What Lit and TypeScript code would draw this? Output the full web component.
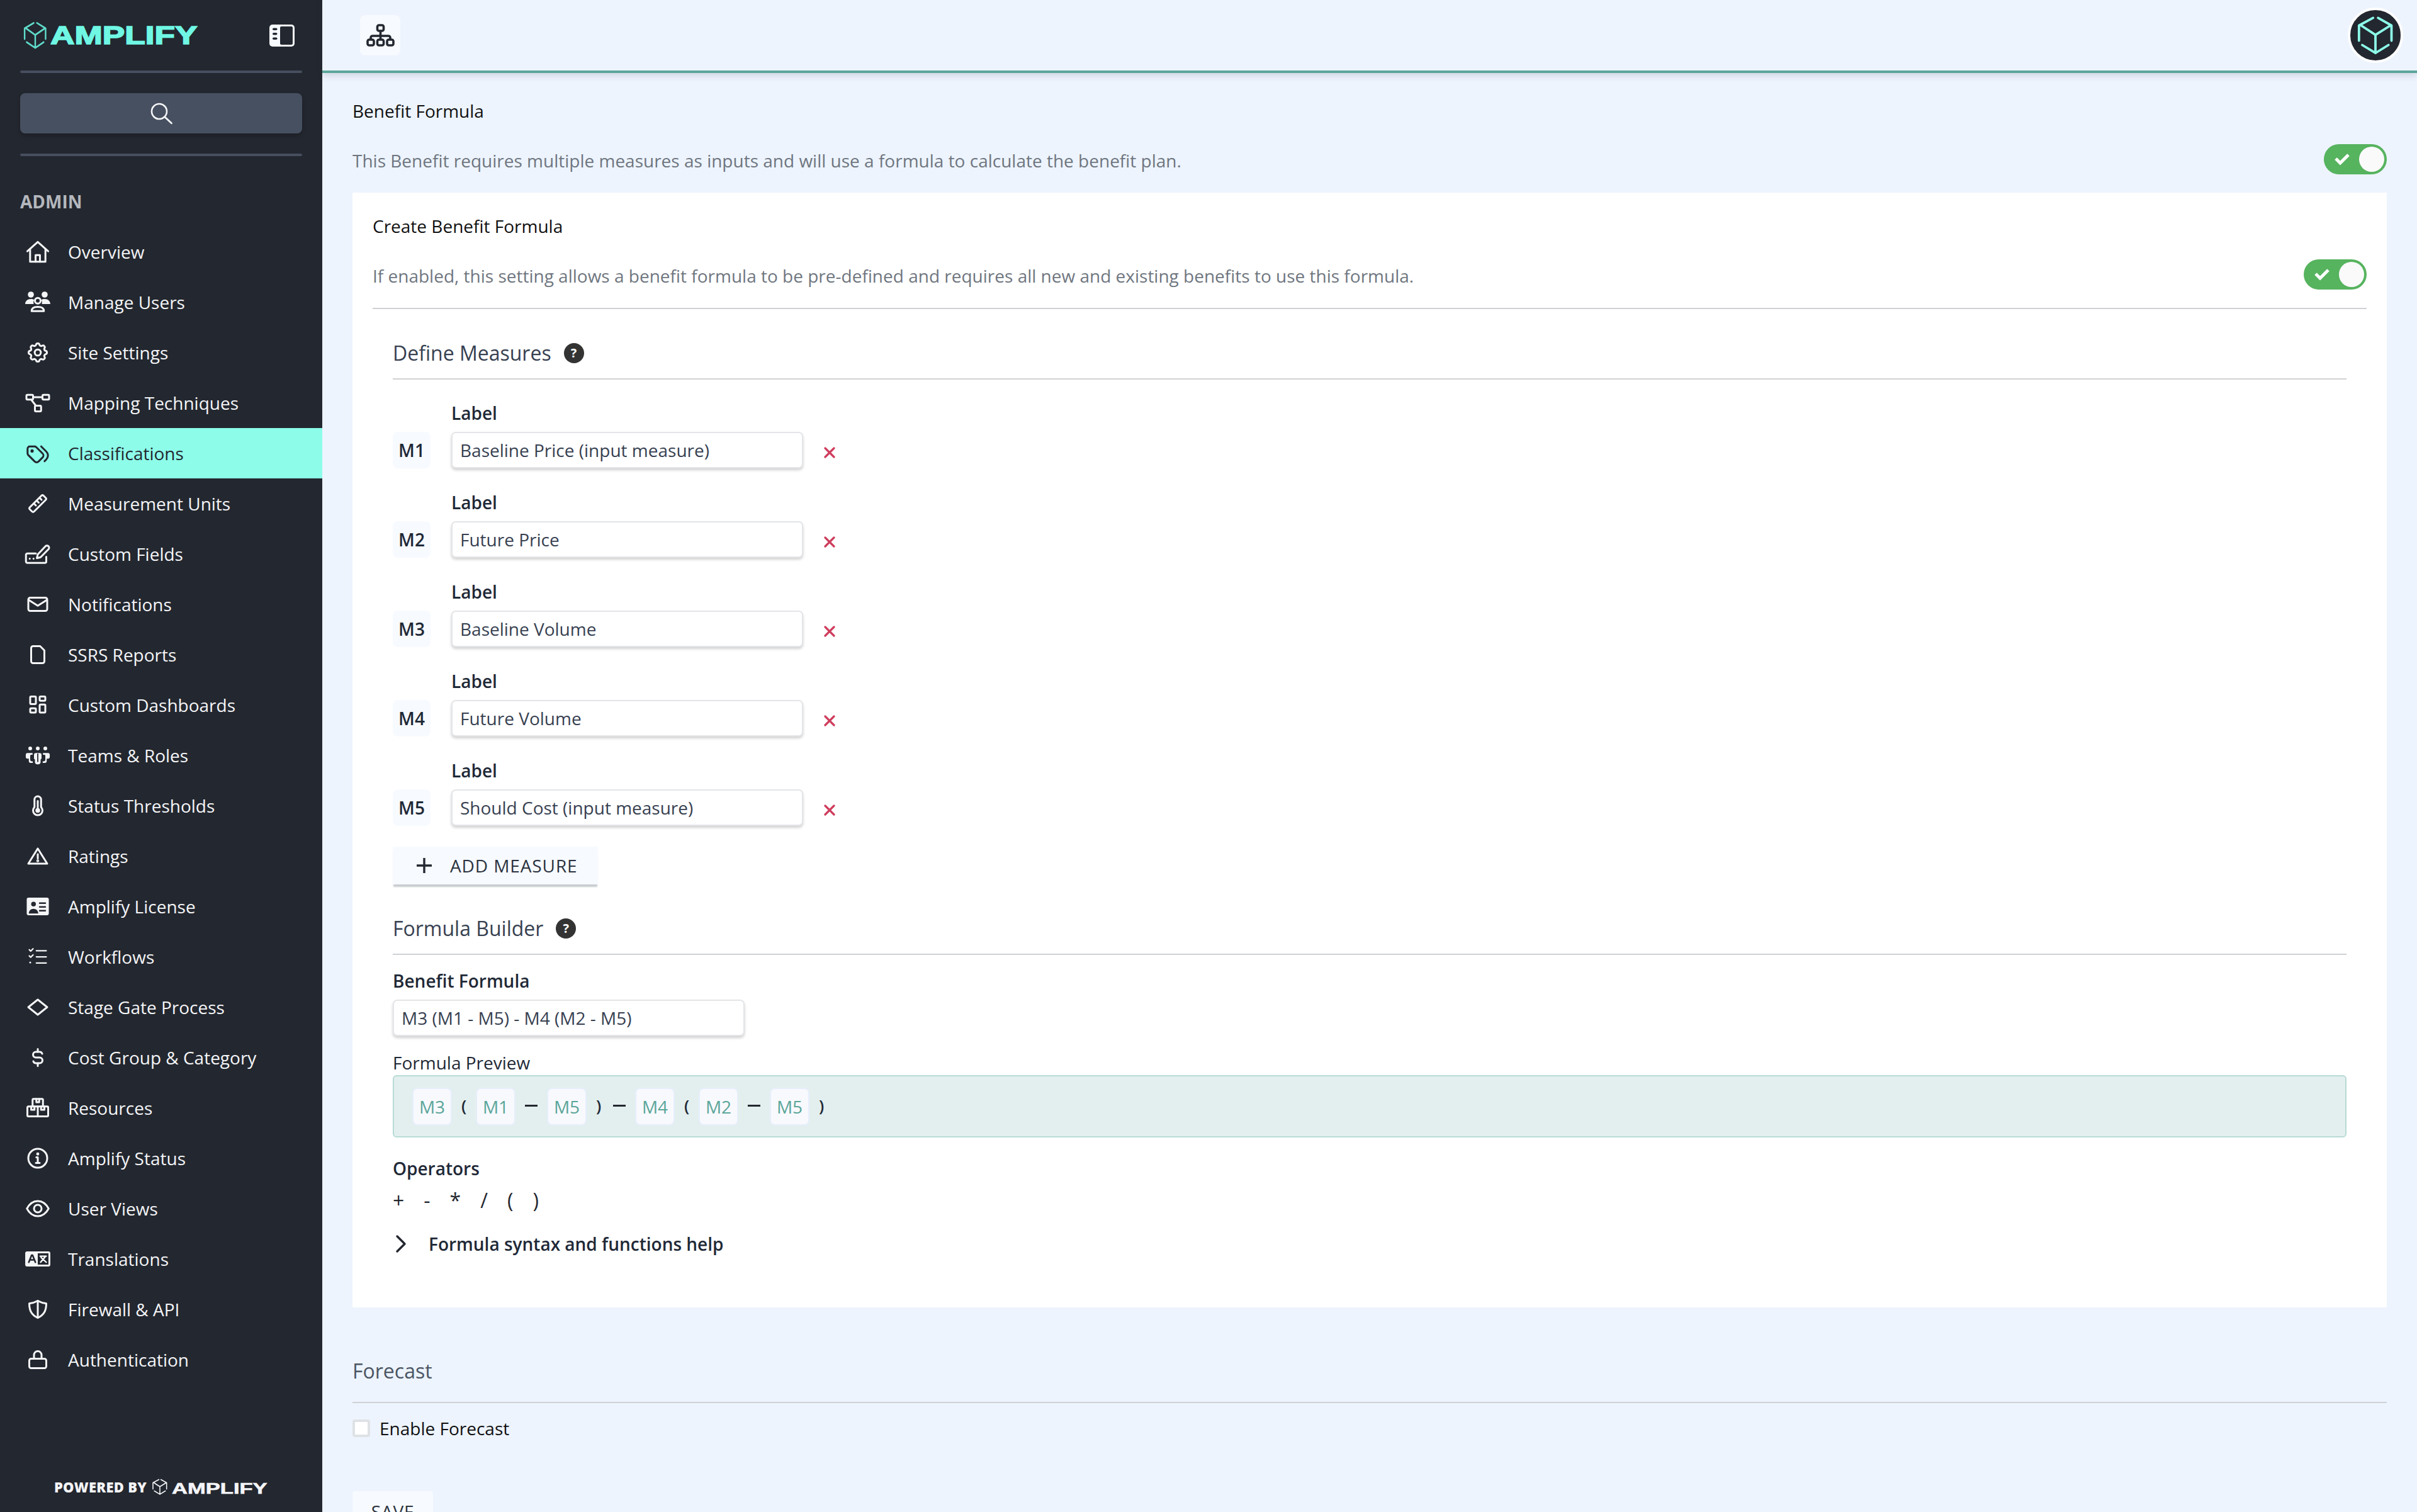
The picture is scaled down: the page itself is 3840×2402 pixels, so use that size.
import { LitElement, html, css, svg } from "lit";
import { customElement } from "lit/decorators.js";

const D = "#23272f";
const sc = (s: number, c: unknown) => svg`<g transform="translate(12 12) scale(${s}) translate(-12 -12)" stroke-width=${2 / s}>${c}</g>`;
const icons: Record<string, unknown> = {
  home: sc(1.16, svg`<path d="M2.500 11.500 12 3l9.500 8.500"/><path d="M5 9.500V21h14V9.500"/><path d="M10 21v-6h4v6"/>`),
  users: svg`<g fill="currentColor" stroke="none"><circle cx="4.700" cy="4" r="3.200"/><circle cx="19.300" cy="4" r="3.200"/><path d="M-1.300 14c0-3 2.400-5.300 6-5.300 1.300 0 2.600.3 3.600 1-.8 1-1.100 2.500-.6 4.300z"/><path d="M25.300 14c0-3-2.400-5.300-6-5.300-1.300 0-2.600.3-3.600 1 .8 1 1.100 2.500.6 4.300z"/></g><circle cx="12" cy="10.500" r="3"/><path d="M5.500 21.500c0-3 2.500-4.500 6.500-4.500s6.500 1.500 6.500 4.500z"/>`,
  gear: sc(1.08, svg`<path d="M10.325 4.317c.426-1.756 2.924-1.756 3.350 0a1.724 1.724 0 0 0 2.573 1.066c1.543-.94 3.310.826 2.370 2.370a1.724 1.724 0 0 0 1.065 2.572c1.756.426 1.756 2.924 0 3.350a1.724 1.724 0 0 0-1.066 2.573c.94 1.543-.826 3.310-2.370 2.370a1.724 1.724 0 0 0-2.572 1.065c-.426 1.756-2.924 1.756-3.350 0a1.724 1.724 0 0 0-2.573-1.066c-1.543.94-3.310-.826-2.370-2.370a1.724 1.724 0 0 0-1.065-2.572c-1.756-.426-1.756-2.924 0-3.350a1.724 1.724 0 0 0 1.066-2.573c-.94-1.543.826-3.310 2.370-2.370 1 .608 2.296.07 2.572-1.065z"/><circle cx="12" cy="12" r="3"/>`),
  map: svg`<rect x="0" y="3.500" width="7" height="5" rx="1"/><rect x="17" y="3.500" width="7" height="5" rx="1"/><rect x="9" y="15" width="6.500" height="6" rx="1"/><path d="M7 6h10M5 8.500l5 6.500"/>`,
  tags: sc(1.2, svg`<path d="M3 8v4.172a2 2 0 0 0 .586 1.414l5.710 5.710a2.410 2.410 0 0 0 3.408 0l3.592-3.592a2.410 2.410 0 0 0 0-3.408l-5.710-5.710A2 2 0 0 0 9.172 6H5a2 2 0 0 0-2 2z"/><path d="M18 19l1.592-1.592a4.820 4.820 0 0 0 0-6.816L15 6"/><circle cx="7" cy="10" r=".6" fill="currentColor"/>`),
  ruler: svg`<path d="M3.500 16 16 3.500a1.500 1.500 0 0 1 2 0l2.500 2.500a1.500 1.500 0 0 1 0 2L8 20.500a1.500 1.500 0 0 1-2 0L3.500 18a1.500 1.500 0 0 1 0-2z"/><path d="M8 12l2 2M11 9l2 2M14 6l2 2"/>`,
  fields: svg`<path d="M21 15v5a1.500 1.500 0 0 1-1.500 1.500H1A1.500 1.500 0 0 1-.5 20v-7A1.500 1.500 0 0 1 1 11.500h9"/><path d="M11 16.500l1-4L20 4a2 2 0 0 1 3.500 2.800L15 15.500z"/><path d="M3.500 17h.01M7.500 17h.01"/>`,
  mail: svg`<rect x="2" y="5" width="20" height="14" rx="2"/><path d="M2.500 7.500l9.500 6 9.500-6"/>`,
  file: svg`<path d="M5 5a2 2 0 0 1 2-2h7.500L19 7.500V19a2 2 0 0 1-2 2H7a2 2 0 0 1-2-2z"/>`,
  dash: svg`<path d="M5 3h4a1 1 0 0 1 1 1v6a1 1 0 0 1-1 1H5a1 1 0 0 1-1-1V4a1 1 0 0 1 1-1"/><path d="M5 15.500h4a1 1 0 0 1 1 1V19a1 1 0 0 1-1 1H5a1 1 0 0 1-1-1v-2.500a1 1 0 0 1 1-1"/><path d="M15 11.500h4a1 1 0 0 1 1 1V19a1 1 0 0 1-1 1h-4a1 1 0 0 1-1-1v-6.500a1 1 0 0 1 1-1"/><path d="M15 3h4a1 1 0 0 1 1 1v2.500a1 1 0 0 1-1 1h-4a1 1 0 0 1-1-1V4a1 1 0 0 1 1-1"/>`,
  teams: svg`<g fill="currentColor" stroke="none"><circle cx="4" cy="4.700" r="2"/><circle cx="12" cy="4.700" r="2"/><circle cx="20" cy="4.700" r="2"/><path d="M8 11.500a2 2 0 0 1 2-2h4a2 2 0 0 1 2 2v3.500a1.500 1.500 0 0 1-1 1.400v3a2.500 2.500 0 0 1-2.500 2.100h-1A2.500 2.500 0 0 1 9 19.400v-3A1.500 1.500 0 0 1 8 15z"/><path d="M1.500 9.500H6.500v1.800H5a1 1 0 0 0-1 1v4a2 2 0 0 0 2 2h.8V20H4.500a2 2 0 0 1-2-2v-2.500h-1A2 2 0 0 1-.7 13.500V11.500a2 2 0 0 1 2.200-2z"/><path d="M22.500 9.500H17.500v1.800H19a1 1 0 0 1 1 1v4a2 2 0 0 1-2 2h-.8V20h2.300a2 2 0 0 0 2-2v-2.500h1a2 2 0 0 0 2.200-2V11.500a2 2 0 0 0-2.200-2z"/></g><path d="M12 10.500v8" stroke="${D}" stroke-width="1.200"/>`,
  thermo: svg`<path d="M8.500 13.500V5.500a3.500 3.500 0 0 1 7 0v8a5 5 0 1 1-7 0z"/><path d="M12 7v8"/><circle cx="12" cy="17" r="1.500" fill="currentColor"/>`,
  alert: svg`<path d="M12 4 22 20H2z"/><path d="M12 10v4.500"/><circle cx="12" cy="17" r=".5" fill="currentColor"/>`,
  license: svg`<rect x=".3" y="2.700" width="23.400" height="18.600" rx="2" fill="currentColor" stroke="none"/><circle cx="7.500" cy="9.500" r="2.500" fill="${D}" stroke="none"/><path d="M2.500 19.500c0-3 2.200-5 5-5s5 2 5 5z" fill="${D}" stroke="none"/><path d="M14 8.500h6M14 12.500h6M14 16.500h6" stroke="${D}" stroke-width="1.600"/>`,
  list: svg`<path d="M3 4.500l1.500 1.500 2.500-2.500M3 11l1.500 1.500L7 10" stroke-width="1.500"/><path d="M4 18h.01"/><path d="M10.500 5.500H21M10.500 12H21M10.500 18.500H21" stroke-width="1.500"/>`,
  diamond: svg`<path d="M12 4 22 12 12 20 2 12z"/>`,
  dollar: svg`<path d="M16.700 8A3 3 0 0 0 14 6h-4a3 3 0 0 0 0 6h4a3 3 0 0 1 0 6h-4a3 3 0 0 1-2.700-2"/><path d="M12 3v3m0 12v3"/>`,
  res: svg`<path d="M6.500 10.500V3.500a1 1 0 0 1 1-1h9a1 1 0 0 1 1 1v7"/><path d="M10.500 2.500v3.500h3V2.500"/><path d="M1 11.500a1 1 0 0 1 1-1h10v10.500H2a1 1 0 0 1-1-1z"/><path d="M12 10.500h10a1 1 0 0 1 1 1V20a1 1 0 0 1-1 1H12"/><path d="M5 10.500V14h3.500v-3.500M15.500 10.500V14H19v-3.500"/>`,
  info: svg`<circle cx="12" cy="12" r="10"/><path d="M10.500 11H12v6M10 17h4"/><circle cx="12" cy="7.500" r=".6" fill="currentColor"/>`,
  eye: svg`<path d="M.5 12c2.700-5 6.700-8 11.500-8s8.800 3 11.500 8c-2.700 5-6.700 8-11.500 8S3.200 17 .5 12z"/><circle cx="12" cy="12" r="4"/>`,
  trans: svg`<rect x="-1.300" y="4" width="26.600" height="16" rx="2" fill="currentColor" stroke="none"/><rect x="12" y="6" width="11.300" height="12" fill="${D}" stroke="none"/><path d="M2.500 15.500 5.500 8h1l3 7.500M4 13h4" stroke="${D}" stroke-width="1.700"/><path d="M14.500 9h6.500M20 9.500 15 15.500M15.500 10.500 21 15.500" stroke="#fff" stroke-width="1.500"/>`,
  shield: svg`<path d="M12 3c3 1.700 6 2.500 9 2.800 0 7.700-2.500 12.200-9 15.200-6.500-3-9-7.500-9-15.200C6 5.500 9 4.700 12 3z"/><path d="M12 3v18"/>`,
  lock: svg`<rect x="3" y="11" width="18" height="10" rx="2"/><path d="M8 11V7a4 4 0 0 1 8 0v4"/>`,
};

const nav: [string, string][] = [
  ["Overview", "home"], ["Manage Users", "users"], ["Site Settings", "gear"], ["Mapping Techniques", "map"],
  ["Classifications", "tags"], ["Measurement Units", "ruler"], ["Custom Fields", "fields"], ["Notifications", "mail"],
  ["SSRS Reports", "file"], ["Custom Dashboards", "dash"], ["Teams & Roles", "teams"], ["Status Thresholds", "thermo"],
  ["Ratings", "alert"], ["Amplify License", "license"], ["Workflows", "list"], ["Stage Gate Process", "diamond"],
  ["Cost Group & Category", "dollar"], ["Resources", "res"], ["Amplify Status", "info"], ["User Views", "eye"],
  ["Translations", "trans"], ["Firewall & API", "shield"], ["Authentication", "lock"],
];

const measures: [string, string][] = [
  ["M1", "Baseline Price (input measure)"], ["M2", "Future Price"], ["M3", "Baseline Volume"],
  ["M4", "Future Volume"], ["M5", "Should Cost (input measure)"],
];

const cube = (cls: string) => html`<svg class=${cls} viewBox="0 0 180 180" preserveAspectRatio="none" fill="none" stroke="currentColor" stroke-width="11" stroke-linecap="round" stroke-linejoin="round">
  <path d="M14 115V45L79 10M102 10 164 45V115M29 135 90 172 150 135M24 45 90 88 159 45M90 88V172"/></svg>`;

@customElement("app-root")
export class AppRoot extends LitElement {
  static styles = css`
    :host { display: block; width: 3840px; height: 2402px; overflow: hidden; font-family: "Open Sans", "Noto Sans", sans-serif; font-size: 28px; line-height: 40px; color: #1f2937; background: #edf4fe; }
    * { box-sizing: border-box; }
    .app { display: grid; grid-template-columns: 512px 1fr; height: 2402px; }
    .side { background: #23272f; color: #f4f5f7; display: flex; flex-direction: column; height: 2402px; }
    .brand { height: 112px; display: flex; align-items: center; padding: 0 44px 0 36px; color: #6ff7e4; }
    .brand .cube { width: 40px; height: 44px; flex: none; color: #5fdccb; }
    .word { font-family: "Liberation Sans", sans-serif; font-weight: 700; display: inline-block; transform-origin: left center; white-space: nowrap; }
    .brand .word { font-size: 40px; line-height: 40px; transform: scaleX(1.33); margin-left: 4px; -webkit-text-stroke: 1.6px currentColor; }
    .brand .panel { margin-left: auto; width: 40px; height: 35px; flex: none; }
    .rule { height: 4px; margin: 0 32px; background: #474f5e; border-radius: 2px; flex: none; }
    .search { height: 64px; margin: 32px; background: #475060; border-radius: 8px; display: flex; align-items: center; justify-content: center; box-shadow: 0 3px 6px rgba(0,0,0,.25); flex: none; }
    .search svg { width: 36px; height: 36px; }
    .admin { margin: 52px 0 20px 32px; font-weight: 700; color: #b4b7bd; }
    .item { height: 80px; display: flex; align-items: center; gap: 30px; padding-left: 42px; flex: none; }
    .item.on { background: #8dfdea; color: #23272f; }
    .ico { width: 36px; height: 36px; flex: none; fill: none; stroke: currentColor; stroke-width: 2; stroke-linecap: round; stroke-linejoin: round; overflow: visible; }
    .foot { margin-top: auto; height: 80px; display: flex; align-items: center; justify-content: center; gap: 8px; color: #f4f5f7; }
    .foot b { font-size: 22px; font-weight: 800; line-height: 30px; letter-spacing: .25px; }
    .foot .cube { width: 26px; height: 26px; }
    .foot .wbox { width: 153px; margin-left: -2px; }
    .foot .word { font-size: 24px; line-height: 24px; transform: scaleX(1.44); -webkit-text-stroke: .6px currentColor; }
    .main { min-width: 0; }
    .top { height: 116px; border-bottom: 4px solid #5ba69a; box-shadow: 0 4px 10px rgba(60,70,90,.18); display: flex; align-items: center; justify-content: space-between; padding: 0 22px 0 60px; position: relative; }
    .tile { width: 64px; height: 64px; background: #f7faff; border-radius: 8px; display: flex; align-items: center; justify-content: center; }
    .tile svg { width: 45px; height: 36px; }
    .avatar { width: 88px; height: 88px; border-radius: 50%; border: 4px solid #fff; background: #23272f; color: #8dfdea; display: flex; align-items: center; justify-content: center; }
    .avatar .cube { width: 62px; height: 62px; }
    .content { padding: 40px 48px 0; }
    .t { color: #111; }
    .setrow { height: 48px; margin-top: 33px; display: flex; align-items: center; justify-content: space-between; }
    .desc { color: #6f7680; padding-top: 4px; }
    .page-row { margin-bottom: 29px; }
    .tog { width: 100px; height: 48px; background: #56b35e; border-radius: 24px; position: relative; flex: none; }
    .tog svg { position: absolute; left: 17px; top: 14px; width: 24px; height: 20px; }
    .tog i { position: absolute; right: 4px; top: 4px; width: 40px; height: 40px; border-radius: 50%; background: #fafafa; }
    .card { background: #fff; padding: 33px 32px 81px; }
    .sep { border-bottom: 2px solid #cfd1d4; }
    .card > .sep { margin-top: 29px; }
    .sec { padding: 0 32px; }
    .h { font-size: 32px; line-height: 40px; color: #374151; display: flex; align-items: center; gap: 20px; }
    .h .q { width: 32px; height: 32px; border-radius: 50%; background: #333; color: #fff; font-size: 20px; font-weight: 700; line-height: 32px; text-align: center; }
    .hw { padding-bottom: 20px; margin-top: 50px; }
    .m { display: grid; grid-template-columns: 60px 559px auto; column-gap: 33px; margin-top: 34px; align-items: center; }
    .m:first-child { margin-top: 33px; }
    .lab { font-weight: 600; color: #1f2937; }
    .m .lab { grid-column: 2 / 4; margin-bottom: 10px; }
    .chip { width: 60px; height: 58px; background: #f7faff; border-radius: 8px; font-weight: 600; display: flex; align-items: center; justify-content: center; }
    .inp { height: 58px; background: #fff; border: 2px solid #e3e5e8; border-radius: 7px; box-shadow: 0 3px 4px rgba(0,0,0,.18); padding: 0 12px; display: flex; align-items: center; color: #374151; white-space: nowrap; }
    .m svg { width: 18px; height: 18px; stroke: #cf3d5d; stroke-width: 3.2; fill: none; stroke-linecap: round; margin-top: 7px; }
    .m .x { display: flex; }
    .add { margin-top: 33px; width: 326px; height: 60px; background: #f7faff; box-shadow: 0 5px 2px -1px #c9ccd1; display: flex; align-items: center; padding-left: 37px; gap: 28px; letter-spacing: .9px; color: #2b3340; }
    .add svg { width: 26px; height: 26px; stroke: #23272f; stroke-width: 3.4; fill: none; flex: none; }
    .mt21 { margin-top: 21px; }
    .fi { width: 559px; margin-top: 10px; }
    .pl { margin-top: 22px; color: #1f2937; }
    .box { height: 99px; background: #e3efee; border: 2px solid #b7dbd5; border-radius: 6px; display: flex; align-items: center; padding-left: 29px; }
    .tk { width: 63px; height: 60px; background: #f8f9fd; border: 2px solid #e6eefc; border-radius: 8px; color: #5ba69a; display: flex; align-items: center; justify-content: center; flex: none; }
    .paren { width: 10px; margin: -4px 14px 0; text-align: center; font-weight: 600; font-size: 26px; color: #1f2937; }
    .minus { width: 20px; height: 3px; margin: -2px 15px 0; background: #23272f; flex: none; }
    .minus.aft { margin-left: 4px; }
    .ops-l { margin-top: 29px; }
    .ops { margin-top: 9px; display: flex; gap: 31px; font-size: 32px; line-height: 44px; color: #23272f; }
    .help { margin-top: 27px; display: flex; align-items: center; gap: 35px; font-weight: 600; height: 40px; padding-left: 4px; }
    .help svg { width: 18px; height: 30px; fill: none; stroke: #23272f; stroke-width: 3.4; stroke-linecap: round; stroke-linejoin: round; flex: none; }
    .fc { margin-top: 79px; font-size: 32px; line-height: 44px; color: #4b5563; padding-bottom: 27px; }
    .en { margin-top: 26px; display: flex; align-items: center; gap: 15px; height: 28px; color: #111; }
    .cb { width: 28px; height: 28px; border: 4px solid #dfe2e5; border-radius: 4px; background: #fff; flex: none; }
    .save { margin-top: 86px; width: 128px; height: 64px; background: #f7faff; display: flex; align-items: center; justify-content: center; letter-spacing: .8px; color: #2b3340; border-radius: 4px 4px 0 0; }
  `;

  render() {
    const q = html`<span class="q">?</span>`;
    const tok = (s: string) => html`<span class="tk">${s}</span>`;
    const op = (s: string) => html`<span class="paren">${s}</span>`;
    return html`<div class="app">
      <aside class="side">
        <div class="brand">
          ${cube("cube")}
          <span class="word">AMPLIFY</span>
          <svg class="panel" viewBox="0 0 40 35"><rect width="40" height="35" rx="5" fill="#f7faff"/><rect x="17" y="3" width="20" height="29" rx="2" fill="#23272f"/><rect x="5" y="5.500" width="7.500" height="3.500" rx="1.700" fill="#23272f"/><rect x="5" y="13" width="7.500" height="3.500" rx="1.700" fill="#23272f"/><rect x="5" y="20.500" width="7.500" height="3.500" rx="1.700" fill="#23272f"/></svg>
        </div>
        <div class="rule"></div>
        <div class="search"><svg class="ico" viewBox="0 0 24 24"><circle cx="10" cy="10" r="8" stroke-width="1.700"/><path d="M16 16l7 6.500" stroke-width="1.900"/></svg></div>
        <div class="rule"></div>
        <div class="admin">ADMIN</div>
        ${nav.map(([t, i]) => html`<div class="item ${t === "Classifications" ? "on" : ""}"><svg class="ico" viewBox="0 0 24 24">${icons[i]}</svg><span>${t}</span></div>`)}
        <div class="foot"><b>POWERED BY</b>${cube("cube")}<span class="wbox"><span class="word">AMPLIFY</span></span></div>
      </aside>
      <main class="main">
        <header class="top">
          <div class="tile"><svg viewBox="0 0 45 36" fill="none" stroke="#23272f" stroke-width="3.600" stroke-linejoin="round"><rect x="17.500" y="2" width="10" height="9" rx="2.500"/><rect x="2" y="25" width="10" height="9" rx="2.500"/><rect x="17.500" y="25" width="10" height="9" rx="2.500"/><rect x="33" y="25" width="10" height="9" rx="2.500"/><path d="M22.500 11v14M7 25v-3a3 3 0 0 1 3-3h25a3 3 0 0 1 3 3v3"/></svg></div>
          <div class="avatar">${cube("cube")}</div>
        </header>
        <div class="content">
          <div class="t">Benefit Formula</div>
          <div class="setrow page-row"><span class="desc">This Benefit requires multiple measures as inputs and will use a formula to calculate the benefit plan.</span>${this.toggle()}</div>
          <section class="card">
            <div class="t">Create Benefit Formula</div>
            <div class="setrow"><span class="desc">If enabled, this setting allows a benefit formula to be pre-defined and requires all new and existing benefits to use this formula.</span>${this.toggle()}</div>
            <div class="sep"></div>
            <div class="sec">
              <div class="hw sep"><div class="h">Define Measures ${q}</div></div>
              <div>
                ${measures.map(([k, v]) => html`<div class="m">
                  <span class="lab">Label</span>
                  <span class="chip">${k}</span>
                  <span class="inp">${v}</span>
                  <span class="x"><svg viewBox="0 0 18 18"><path d="M2 2l14 14M16 2 2 16"/></svg></span>
                </div>`)}
              </div>
              <div class="add"><svg viewBox="0 0 26 26"><path d="M13 1v24M1 13h24"/></svg><span>ADD MEASURE</span></div>
              <div class="hw sep"><div class="h">Formula Builder ${q}</div></div>
              <div class="lab mt21">Benefit Formula</div>
              <div class="inp fi">M3 (M1 - M5) - M4 (M2 - M5)</div>
              <div class="pl">Formula Preview</div>
              <div class="box">
                ${tok("M3")}${op("(")}${tok("M1")}<span class="minus"></span>${tok("M5")}${op(")")}<span class="minus aft"></span>${tok("M4")}${op("(")}${tok("M2")}<span class="minus"></span>${tok("M5")}${op(")")}
              </div>
              <div class="lab ops-l">Operators</div>
              <div class="ops"><span>+</span><span>-</span><span>*</span><span>/</span><span>(</span><span>)</span></div>
              <div class="help"><svg viewBox="0 0 18 30"><path d="M3 3l12 12L3 27"/></svg><span>Formula syntax and functions help</span></div>
            </div>
          </section>
          <div class="fc sep">Forecast</div>
          <div class="en"><span class="cb"></span><span>Enable Forecast</span></div>
          <div class="save">SAVE</div>
        </div>
      </main>
    </div>`;
  }

  toggle() {
    return html`<span class="tog"><svg viewBox="0 0 24 20" fill="none" stroke="#fff" stroke-width="5"><path d="M2 9l7 7L22 3"/></svg><i></i></span>`;
  }
}
